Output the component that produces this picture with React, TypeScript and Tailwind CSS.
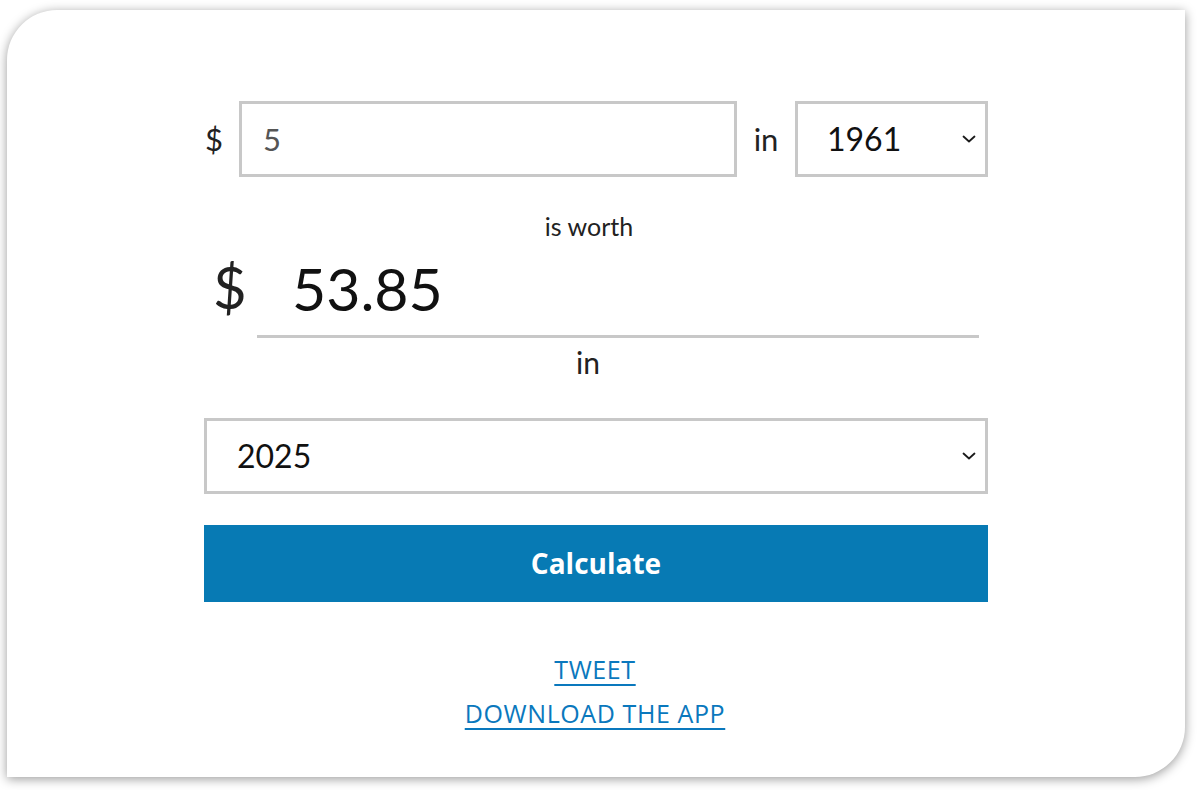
import { useState } from 'react'

function Chevron() {
  return (
    <svg width="14" height="8" viewBox="0 0 14 8" fill="none" className="pointer-events-none absolute right-[12px] top-1/2 -translate-y-1/2">
      <path d="M1.5 1.5l5.5 5 5.5-5" stroke="#1a1a1a" strokeWidth="1.8" strokeLinecap="round" strokeLinejoin="round" />
    </svg>
  )
}

export default function App() {
  const [amount, setAmount] = useState('5')
  const [from, setFrom] = useState('1961')
  const [to, setTo] = useState('2025')

  const years = Array.from({ length: 2025 - 1913 + 1 }, (_, i) => String(1913 + i))

  return (
    <div className="w-[1200px] h-[790px] bg-white pt-[10px] pl-[7px]" style={{ fontFamily: 'Lato, "Noto Sans", sans-serif' }}>
      <div className="w-[1178px] h-[767px] bg-white rounded-tl-[50px] rounded-br-[50px] shadow-[0_2px_11px_rgba(0,0,0,0.4)] pt-[91px]">
        <div className="w-[784px] mx-auto flex flex-col">
          <div className="flex items-center text-[31px] text-[#222]">
            <span className="w-[35px] pl-[1px]">$</span>
            <input
              value={amount}
              onChange={(e) => setAmount(e.target.value)}
              className="w-[498px] h-[76px] border-[3px] border-[#c8c8c8] pl-[21px] text-[#555] outline-none"
            />
            <span className="w-[58px] text-center">in</span>
            <div className="relative">
              <select
                value={from}
                onChange={(e) => setFrom(e.target.value)}
                className="appearance-none w-[193px] h-[76px] border-[3px] border-[#c8c8c8] pl-[29px] bg-white text-[32px] text-[#111] outline-none"
              >
                {years.map((y) => (
                  <option key={y}>{y}</option>
                ))}
              </select>
              <Chevron />
            </div>
          </div>

          <p className="mt-[33px] text-center text-[25px] text-[#222] pr-[14px] leading-[32px]">is worth</p>

          <div className="flex items-end mt-[4px]">
            <span className="w-[53px] pl-[9px] text-[58px] leading-[70px] text-[#222] mb-[16px]">$</span>
            <div className="w-[722px] border-b-[3px] border-[#c8c8c8] pl-[35px] pb-[3px] text-[59px] leading-[86px] text-[#111]">53.85</div>
          </div>

          <p className="text-center text-[30px] text-[#222] pr-[16px] mt-[2px] leading-[44px]">in</p>

          <div className="relative mt-[34px]">
            <select
              value={to}
              onChange={(e) => setTo(e.target.value)}
              className="appearance-none w-full h-[76px] border-[3px] border-[#c8c8c8] pl-[30px] bg-white text-[32px] text-[#111] outline-none"
            >
              {years.map((y) => (
                <option key={y}>{y}</option>
              ))}
            </select>
            <Chevron />
          </div>

          <button
            className="mt-[31px] h-[77px] bg-[#077ab4] text-white text-[28px] font-bold pb-[2px]"
            style={{ fontFamily: '"Open Sans", sans-serif' }}
          >
            Calculate
          </button>

          <div className="mt-[51px] flex flex-col items-center gap-[12px] text-[25px] tracking-[0.6px] text-[#0a78bd] pr-[2px]" style={{ fontFamily: '"Open Sans", sans-serif' }}>
            <a href="#" className="underline underline-offset-[5px] leading-[32px]">TWEET</a>
            <a href="#" className="underline underline-offset-[5px] leading-[32px]">DOWNLOAD THE APP</a>
          </div>
        </div>
      </div>
    </div>
  )
}
